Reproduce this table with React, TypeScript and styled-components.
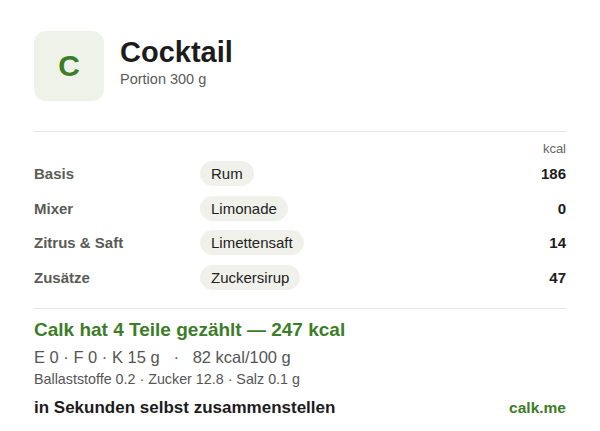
import React from "react";
import styled, { createGlobalStyle } from "styled-components";

const Global = createGlobalStyle`
  html, body { margin: 0; padding: 0; background: #fff; }
  body { font-family: "Liberation Sans", Arial, sans-serif; color: #1a1a1a; }
`;

const Card = styled.div`
  width: 532px;
  padding: 31px 34px 0 34px;
  display: flex;
  flex-direction: column;
`;

const Header = styled.div`
  display: flex;
  align-items: flex-start;
  gap: 16px;
  padding-bottom: 30px;
  border-bottom: 1px solid #e4e4e2;
`;

const Logo = styled.div`
  width: 70px;
  height: 70px;
  border-radius: 12px;
  background: #eef2e8;
  display: flex;
  align-items: center;
  justify-content: center;
  color: #3b7d28;
  font-weight: 700;
  font-size: 30px;
`;

const HeadText = styled.div`
  display: flex;
  flex-direction: column;
  padding-top: 5px;
`;

const Title = styled.div`
  font-size: 29px;
  font-weight: 700;
  color: #1c1c1c;
  line-height: 32px;
`;

const Sub = styled.div`
  font-size: 14.5px;
  color: #5a5a5a;
  margin-top: 3px;
`;

const UnitRow = styled.div`
  text-align: right;
  font-size: 13px;
  color: #666;
  margin-top: 10px;
  line-height: 14px;
`;

const Rows = styled.div`
  display: flex;
  flex-direction: column;
  gap: 10.5px;
  margin-top: 5px;
  padding-bottom: 19px;
  border-bottom: 1px solid #e4e4e2;
`;

const Row = styled.div`
  display: grid;
  grid-template-columns: 166px 1fr auto;
  align-items: center;
  height: 24px;
`;

const Label = styled.div`
  font-size: 15px;
  font-weight: 700;
  color: #5b5b55;
`;

const Pill = styled.span`
  justify-self: start;
  background: #f1f1ec;
  border-radius: 13px;
  padding: 0 11px;
  height: 25px;
  line-height: 25px;
  font-size: 15px;
  color: #222;
`;

const Value = styled.div`
  font-size: 15px;
  font-weight: 700;
  color: #1c1c1c;
  text-align: right;
`;

const Summary = styled.div`
  font-size: 19px;
  font-weight: 700;
  color: #3b7d28;
  margin-top: 10px;
  line-height: 22px;
`;

const Macro = styled.div`
  font-size: 16.5px;
  color: #555;
  margin-top: 7px;
  line-height: 19px;
  white-space: pre;
`;

const Micro = styled.div`
  font-size: 14.3px;
  color: #555;
  margin-top: 4px;
  line-height: 16px;
`;

const Footer = styled.div`
  display: flex;
  justify-content: space-between;
  align-items: baseline;
  margin-top: 11px;
  font-weight: 700;
`;

const Cta = styled.span`
  font-size: 17px;
  color: #1c1c1c;
`;

const Brand = styled.span`
  font-size: 15.5px;
  color: #3b7d28;
`;

const items = [
  { label: "Basis", name: "Rum", kcal: 186 },
  { label: "Mixer", name: "Limonade", kcal: 0 },
  { label: "Zitrus & Saft", name: "Limettensaft", kcal: 14 },
  { label: "Zusätze", name: "Zuckersirup", kcal: 47 },
];

export default function App() {
  return (
    <>
      <Global />
      <Card>
        <Header>
          <Logo>C</Logo>
          <HeadText>
            <Title>Cocktail</Title>
            <Sub>Portion 300 g</Sub>
          </HeadText>
        </Header>
        <UnitRow>kcal</UnitRow>
        <Rows>
          {items.map((it) => (
            <Row key={it.label}>
              <Label>{it.label}</Label>
              <Pill>{it.name}</Pill>
              <Value>{it.kcal}</Value>
            </Row>
          ))}
        </Rows>
        <Summary>Calk hat 4 Teile gezählt — 247 kcal</Summary>
        <Macro>{"E 0 · F 0 · K 15 g   ·   82 kcal/100 g"}</Macro>
        <Micro>Ballaststoffe 0.2 · Zucker 12.8 · Salz 0.1 g</Micro>
        <Footer>
          <Cta>in Sekunden selbst zusammenstellen</Cta>
          <Brand>calk.me</Brand>
        </Footer>
      </Card>
    </>
  );
}
